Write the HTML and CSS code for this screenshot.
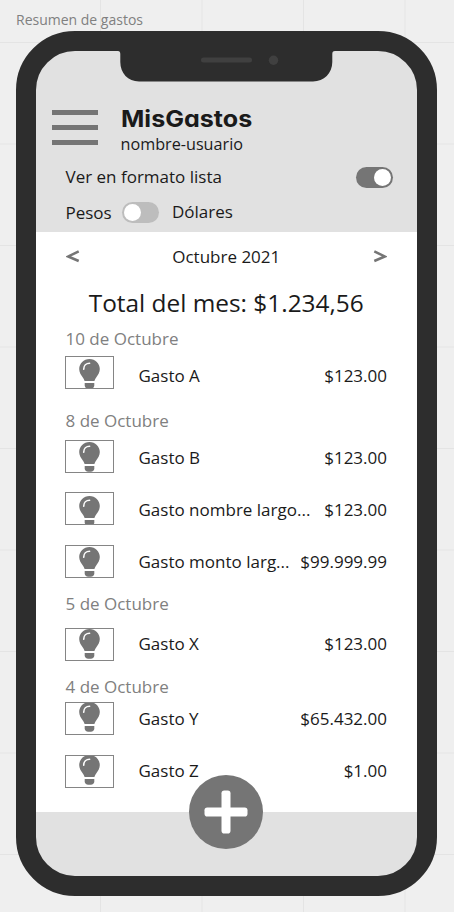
FILE: index.html
```
<!DOCTYPE html>
<html lang="es">
<head>
<meta charset="utf-8">
<title>Resumen de gastos</title>
<link rel="stylesheet" href="styles.css">
</head>
<body>
<svg class="defs" width="0" height="0" aria-hidden="true">
  <symbol id="bulb" viewBox="0 0 21 30">
    <path d="M10.5 0C4.7 0 .2 4.5.2 10.1c0 3.4 1.700 5.700 3.300 7.900 1 1.400 1.700 2.800 2.100 4h9.800c.4-1.200 1.100-2.600 2.100-4 1.600-2.200 3.300-4.500 3.300-7.900C20.800 4.500 16.300 0 10.500 0z"/>
    <path d="M5.700 24h9.600v2.200c0 2-1.500 3.600-3.500 3.600H9.200c-2 0-3.500-1.600-3.500-3.600z"/>
    <path d="M4.700 10.200C4.700 6.700 7.300 4.300 10.600 4.300" fill="none" stroke="#fff" stroke-width="1.600" stroke-linecap="round"/>
  </symbol>
</svg>
<div class="caption">Resumen de gastos</div>
<main class="phone">
  <div class="notch">
    <svg width="217" height="33" viewBox="0 0 217 33">
      <path fill="#2d2d2d" d="M0 0H217V2C215 2 214.300 3 214.300 5V13C214.300 24 206 32.500 195 32.500H21C10 32.500 2.300 24 2.300 13V5C2.300 3 1.500 2 0 2z"/>
      <rect x="83" y="8.500" width="51" height="5" rx="2.500" fill="#404040"/>
      <circle cx="155.500" cy="11.300" r="4.700" fill="#404040"/>
    </svg>
  </div>
  <header class="header">
    <div class="brand">
      <div class="menu"><span></span><span></span><span></span></div>
      <div>
        <h1>MisGastos</h1>
        <div class="user">nombre-usuario</div>
      </div>
    </div>
    <div class="option format"><span>Ver en formato lista</span><span class="toggle on"></span></div>
    <div class="option currency"><span class="pesos">Pesos</span><span class="toggle"></span><span class="dolares">Dólares</span></div>
  </header>
  <section class="content">
    <nav class="month">
      <svg width="14" height="14" viewBox="0 0 14 14"><path d="M12.700 2.400 2.200 7.500 12.700 12"/></svg>
      <span>Octubre 2021</span>
      <svg width="14" height="14" viewBox="0 0 14 14"><path d="M1.300 2.400 11.800 7.500 1.300 12"/></svg>
    </nav>
    <div class="total">Total del mes: $1.234,56</div>
    <h2 class="d10">10 de Octubre</h2>
    <div class="row a"><div class="thumb"><svg><use href="#bulb"/></svg></div><span class="name">Gasto A</span><span>$123.00</span></div>
    <h2 class="d8">8 de Octubre</h2>
    <div class="row b"><div class="thumb"><svg><use href="#bulb"/></svg></div><span class="name">Gasto B</span><span>$123.00</span></div>
    <div class="row n"><div class="thumb"><svg><use href="#bulb"/></svg></div><span class="name">Gasto nombre largo...</span><span>$123.00</span></div>
    <div class="row m"><div class="thumb"><svg><use href="#bulb"/></svg></div><span class="name">Gasto monto larg...</span><span>$99.999.99</span></div>
    <h2 class="d5">5 de Octubre</h2>
    <div class="row x"><div class="thumb"><svg><use href="#bulb"/></svg></div><span class="name">Gasto X</span><span>$123.00</span></div>
    <h2 class="d4">4 de Octubre</h2>
    <div class="row y"><div class="thumb"><svg><use href="#bulb"/></svg></div><span class="name">Gasto Y</span><span>$65.432.00</span></div>
    <div class="row z"><div class="thumb"><svg><use href="#bulb"/></svg></div><span class="name">Gasto Z</span><span>$1.00</span></div>
  </section>
  <footer class="footer">
    <div class="add">
      <svg width="74" height="74" viewBox="0 0 74 74"><rect x="32.500" y="15.500" width="9" height="43" rx="2.800"/><rect x="15.500" y="32.500" width="43" height="9" rx="2.800"/></svg>
    </div>
  </footer>
</main>
</body>
</html>
```
FILE: styles.css
```
* { box-sizing: border-box; }
body {
  margin: 0;
  height: 912px;
  overflow: hidden;
  background-color: #efefef;
  background-image:
    linear-gradient(90deg, #e4e4e4 1px, transparent 1px),
    linear-gradient(#e4e4e4 1px, transparent 1px);
  background-size: 101.500px 101.500px;
  background-position: 100px 42px;
  font-family: "Open Sans", sans-serif;
  font-size: 17px;
  color: #1a1a1a;
}
.defs { display: block; }
svg { display: block; }
.caption { height: 31px; padding: 10px 0 0 16px; font-size: 14px; line-height: 19px; color: #808080; }
.phone {
  position: relative;
  width: 421px;
  height: 865px;
  margin-left: 16px;
  border: 20px solid #2d2d2d;
  border-radius: 59px;
  background: #e1e1e1;
}
.notch { position: absolute; left: 82px; top: -2px; }
.header { height: 181px; padding-top: 55px; }
.brand { display: flex; height: 58px; padding-left: 16px; }
.menu { width: 46px; margin: 4px 22.500px 0 0; }
.menu span { display: block; height: 5.300px; margin-bottom: 9.700px; background: #757575; }
h1 {
  margin: 0;
  font: 750 23px/27px Inter, sans-serif;
  font-feature-settings: "cv11";
  width: max-content;
  transform: scaleX(1.09);
  transform-origin: left;
}
.user { font-size: 16.200px; line-height: 23px; }
.option { display: flex; padding-left: 29.500px; line-height: 24px; height: 24px; }
.format { margin-top: 1px; justify-content: space-between; padding-right: 24.500px; }
.currency { margin-top: 11px; }
.pesos { width: 56.500px; padding-top: 1px; }
.toggle {
  width: 37px;
  height: 21px;
  margin-top: 2px;
  padding: 2px;
  border-radius: 11px;
  background: #bdbdbd;
}
.toggle::before { content: ""; display: block; width: 17px; height: 17px; border-radius: 50%; background: #fff; }
.toggle.on { background: #757575; }
.toggle.on::before { margin-left: auto; }
.dolares { margin-left: 13px; }
.content { height: 580px; padding: 0 30px 0 29.500px; background: #fff; }
.month { display: flex; justify-content: space-between; align-items: center; height: 48px; }
.month path { fill: none; stroke: #757575; stroke-width: 2.500; }
.total { height: 48px; line-height: 46px; font-size: 24.400px; text-align: center; }
h2 { margin: 0; font-size: 17px; line-height: 22px; font-weight: 400; color: #808080; }
.d10 { height: 22px; }
.d8 { height: 30px; padding-top: 8px; }
.d5 { height: 29.500px; padding-top: 5px; }
.d4 { height: 23px; padding-top: 6.500px; }
.row { display: grid; grid-template-columns: 49px 1fr auto; height: 52px; line-height: 52px; margin-left: -.5px; white-space: nowrap; }
.name { padding-left: 24.500px; }
.thumb { height: 33px; border: 1px solid #858585; overflow: hidden; }
.thumb svg { width: 21px; height: 30px; margin: 1px auto 0; fill: #757575; }
.a .thumb { margin-top: 6px; }
.a svg { margin-top: 2px; }
.b .thumb { margin-top: 7.500px; }
.n .thumb { margin-top: 8px; }
.n svg { margin-top: 3px; }
.m .thumb { margin-top: 9px; }
.x .thumb { margin-top: 10px; }
.x svg { margin-top: 0; }
.y .thumb { margin-top: 9.500px; }
.y svg, .z svg { margin-top: -1px; }
.z .thumb { margin-top: 10.500px; }
.footer { display: flex; justify-content: center; height: 64px; }
.add { position: relative; width: 74px; height: 74px; margin: -37px 1px 0 0; border-radius: 50%; background: #757575; }
.add svg { fill: #fff; }
```
